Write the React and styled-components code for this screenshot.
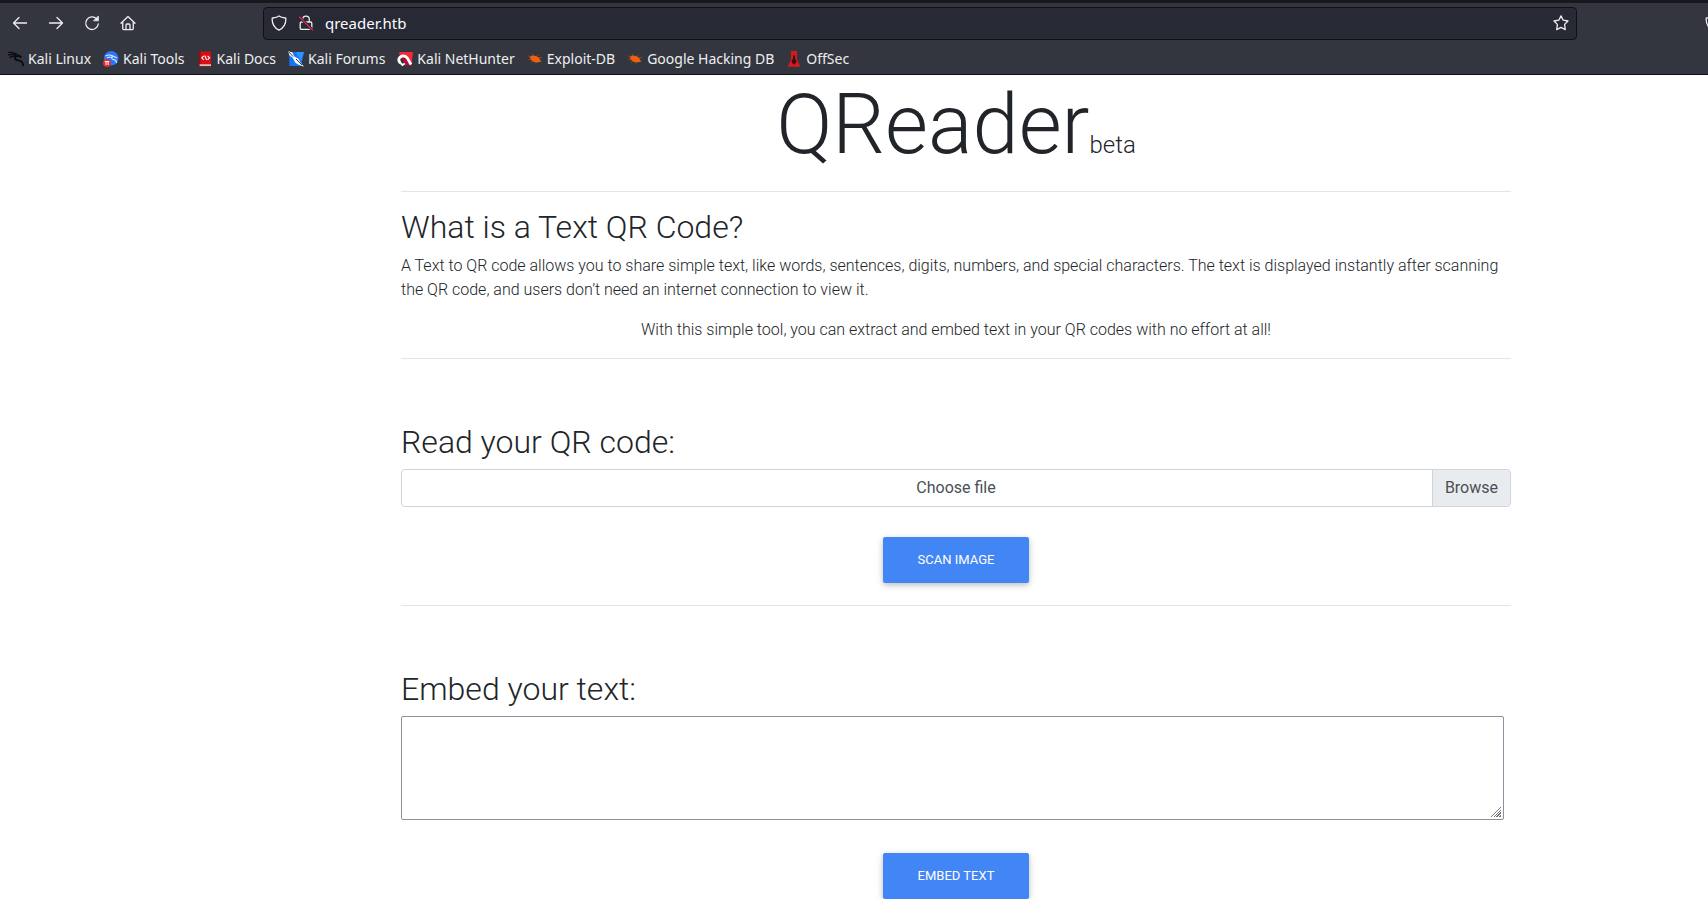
import React from "react";
import styled, { createGlobalStyle } from "styled-components";

const GlobalStyle = createGlobalStyle`
  *, *::before, *::after { box-sizing: border-box; }
  body {
    margin: 0;
    background: #fff;
    color: #212529;
    font: 300 16px/24px Roboto, "Open Sans", sans-serif;
  }
`;

const Page = styled.div`
  overflow-x: hidden;
`;

/* ---------- browser chrome ---------- */

const Chrome = styled.header`
  background: #33363e;
  border-top: 3px solid #17181d;
  border-bottom: 1px solid #0e0f12;
  color: #eeeef2;
  font: 400 14px/20px "Noto Sans", sans-serif;
`;

const Toolbar = styled.div`
  display: flex;
  align-items: center;
  height: 40px;
  padding-left: 2px;
`;

const ToolButton = styled.button`
  display: flex;
  align-items: center;
  justify-content: center;
  flex: none;
  width: 36px;
  height: 32px;
  padding: 0;
  border: 0;
  background: none;
  color: inherit;
`;

const AddressBar = styled.div`
  display: flex;
  flex: 1;
  align-items: center;
  gap: 11px;
  height: 33px;
  margin: 0 128px 0 117px;
  padding: 0 7px;
  background: #272935;
  border: 1px solid #101116;
  border-radius: 4px;
`;

const AddressInput = styled.input`
  flex: 1;
  min-width: 0;
  height: 24px;
  padding: 0;
  border: 0;
  outline: 0;
  background: none;
  color: #fbfbfe;
  font: inherit;
  font-size: 15px;
`;

const StarButton = styled(ToolButton)`
  width: 16px;
`;

const EdgeButton = styled(ToolButton)`
  width: 3px;
  justify-content: flex-start;
  overflow: hidden;
`;

const Bookmarks = styled.nav`
  display: flex;
  align-items: center;
  gap: 12px;
  height: 31px;
  padding-left: 8px;
`;

const Bookmark = styled.a`
  display: flex;
  align-items: center;
  gap: 4px;
  color: inherit;
  text-decoration: none;
  white-space: nowrap;
`;

const Icon = styled.svg.attrs({
  width: 16,
  height: 16,
  viewBox: "0 0 16 16",
  "aria-hidden": true,
})`
  flex: none;
  display: block;
  fill: none;
`;

const LineIcon = styled(Icon)`
  stroke: currentColor;
  stroke-width: 1.3;
  stroke-linecap: round;
  stroke-linejoin: round;
`;

const SHIELD = "M8 1 C6.5 2.2 3.6 2.8 1.7 3 C1.3 3.1 1.1 3.4 1.1 3.8 C1.1 8 2.3 12.5 8 15.2 C13.7 12.5 14.9 8 14.9 3.8 C14.9 3.4 14.7 3.1 14.3 3 C12.4 2.8 9.5 2.2 8 1 Z";

const DragonIcon = () => (
  <Icon>
    <path d="M0 1.5 C4 .8 7 2 9 3.5 L13 5.5 M0 4.2 C3 3 6 3.5 8 4.5 M1.5 7 C3.5 5 6 5 7.5 5.5" stroke="#090a0d" strokeWidth="1.2" />
    <path d="M13.5 6.2 C10 4.2 6.5 5 7 7.5 C7.5 10.2 12.3 8.6 14 11 C14.8 12.3 15 13.6 15.2 15" stroke="#090a0d" strokeWidth="1.8" />
  </Icon>
);

const ToolsIcon = () => (
  <Icon>
    <circle cx="8.2" cy="7.3" r="7.3" fill="#2777ff" />
    <path d="M2.5 5 C5 3.5 8 4 10 5 L14 7 M4 7 C6 5.5 8 6 9 6.5 M10.5 5.5 C7.5 6 8.5 8.5 11 8.8 C13 9 13.5 10.5 13.6 12" stroke="#dfeaff" strokeWidth="1.1" />
    <circle cx="4" cy="12" r="4" fill="#e62b34" />
    <path d="M1.8 10.5 H6.2 M3.1 10.5 V14 M5.1 10.5 V14" stroke="#fff" />
  </Icon>
);

const DocsIcon = () => (
  <Icon>
    <path d="M2 0.5 H14 V15.5 H2 Z" fill="#d90d15" />
    <path d="M2 0.5 H3.6 V15.5 H2 Z" fill="#a3080f" />
    <path d="M2.6 13.3 H14 V14.9 H2.6 Z" fill="#d9d2d2" />
    <path d="M6.8 4.8 L4.8 6.8 L6.8 8.8 M10.6 4.8 L12.6 6.8 L10.6 8.8 M7.7 4.6 L9.7 9" stroke="#fff" strokeWidth="1.1" />
  </Icon>
);

const ForumsIcon = () => (
  <Icon>
    <path d="M1 1 H16 L13 15 H1.5 Z" fill="#1675f5" />
    <path d="M8 1 H16 L13 10 Z" fill="#2f93ff" />
    <path d="M0 0 L4.5 1.5 L6 5.2 L10.5 7.8 L12.2 11 L16 15.8 L10 13.5 L7.3 11.7 L4.5 6.5 L1.5 4.5 Z" fill="#f6f7f9" />
    <path d="M.5 .5 L5 5.5 M8 8 L14 14" stroke="#242b3d" strokeWidth=".9" />
  </Icon>
);

const NetHunterIcon = () => (
  <Icon>
    <path d="M2 1 H16 L14.5 14.5 L8 12 L3 6 Z" fill="#f12a35" />
    <path d="M8 6 L15 15 L9 14 L5 9 Z" fill="#b50d38" />
    <path d="M3.2 12 C-.5 7.5 4.5 3.4 8.5 5.6 C11 7 11.5 9.5 14 13.5" stroke="#fff" strokeWidth="2.8" />
    <path d="M2.5 11 L5.5 14 L7.8 12.6" stroke="#fff" strokeWidth="1.8" />
    <path d="M4.8 10.6 C3.8 8.4 6 6.6 8 8.2" stroke="#22242b" strokeWidth="1" />
  </Icon>
);

const BugIcon = () => (
  <Icon>
    <path d="M2.8 6 C4.2 4 7 4 9.6 5.2 L12.4 7 L13 9 L14.6 10.4 L12.4 11 C9.5 12.2 5.8 11 4 8.8 Z" fill="#ec6110" />
    <path d="M3 6 L1 4.6 M4 8.3 L1.4 8.6 M6 10.2 L4.2 11.6 M9 11.2 L8.8 12.6 M9.8 5.4 L11.6 4 M12 7 L15 6.4 M6 4.5 L5.4 3.2" stroke="#a84c1c" strokeWidth=".8" />
  </Icon>
);

const OffSecIcon = () => (
  <Icon>
    <path d="M5 0 H11 V8.5 L14.5 15.8 H1.5 L5 8.5 Z" fill="#d71a20" />
    <path d="M7 4.5 H9 V8 L10.6 10 L9.6 12.5 H8.6 L8 14 L7.4 12.5 H6.4 L5.4 10 L7 8 Z" fill="#3a0a0d" />
  </Icon>
);

const BOOKMARKS = [
  ["Kali Linux", DragonIcon],
  ["Kali Tools", ToolsIcon],
  ["Kali Docs", DocsIcon],
  ["Kali Forums", ForumsIcon],
  ["Kali NetHunter", NetHunterIcon],
  ["Exploit-DB", BugIcon],
  ["Google Hacking DB", BugIcon],
  ["OffSec", OffSecIcon],
];

/* ---------- page content ---------- */

const Layout = styled.div`
  display: grid;
  grid-template-columns: 401fr minmax(0, 1110px) 197fr;
`;

const Main = styled.main`
  grid-column: 2;
`;

const Title = styled.h1`
  margin: 0;
  font-size: 83px;
  font-weight: 300;
  line-height: 100px;
  text-align: center;
`;

const Beta = styled.span`
  font-size: 24px;
  line-height: 24px;
`;

const Rule = styled.hr`
  height: 1px;
  margin: ${(p) => (p.$afterButton ? 22 : 16)}px 0 16px;
  border: 0;
  background: #e5e5e5;
`;

const Heading = styled.h2`
  margin: 0 0 8px;
  font-size: 32px;
  font-weight: 300;
  line-height: 38px;
`;

const Text = styled.p`
  margin: 0 0 16px;
  text-align: ${(p) => (p.$center ? "center" : "left")};
`;

const Form = styled.form`
  display: flex;
  flex-direction: column;
  padding-top: 48px;
`;

const FileField = styled.label`
  display: grid;
  grid-template-columns: 1fr auto;
  height: 38px;
  overflow: hidden;
  border: 1px solid #ced4da;
  border-radius: 4px;
  color: #495057;
  font-weight: 400;
  line-height: 36px;
`;

const FileInput = styled.input`
  position: absolute;
  width: 1px;
  height: 1px;
  opacity: 0;
`;

const FileName = styled.span`
  grid-area: 1 / 1 / 2 / 3;
  text-align: center;
`;

const Browse = styled.span`
  grid-area: 1 / 2;
  padding: 0 12px;
  background: #e9ecef;
  border-left: 1px solid #ced4da;
`;

const TextBox = styled.textarea`
  width: calc(100% - 7px);
  height: 104px;
  margin-bottom: 3px;
  padding: 2px;
  border: 1px solid #8f8f9d;
  border-radius: 2px;
  background: #fff;
  font: inherit;
  resize: both;

  &::-webkit-resizer {
    background:
      linear-gradient(135deg, #fff 50%, transparent 50%) 2px 2px / 11px 11px no-repeat,
      repeating-linear-gradient(135deg, #777 0 1px, #fff 1px 2px) 2px 2px / 11px 11px no-repeat;
  }
`;

const SubmitButton = styled.button`
  align-self: center;
  width: 146px;
  height: 46px;
  margin-top: 30px;
  padding: 0;
  border: 0;
  border-radius: 2px;
  background: #4285f4;
  box-shadow: 0 2px 5px rgba(0, 0, 0, 0.16), 0 2px 10px rgba(0, 0, 0, 0.12);
  color: #fff;
  font: 400 13px/20px Roboto, sans-serif;
  text-transform: uppercase;
`;

export default function App() {
  return (
    <Page>
      <GlobalStyle />
      <Chrome>
        <Toolbar>
          <ToolButton aria-label="Back">
            <LineIcon><path d="M14.5 8 H1.5 M7 2.5 L1.5 8 L7 13.5" /></LineIcon>
          </ToolButton>
          <ToolButton aria-label="Forward">
            <LineIcon><path d="M1.5 8 H14.5 M9 2.5 L14.5 8 L9 13.5" /></LineIcon>
          </ToolButton>
          <ToolButton aria-label="Reload">
            <LineIcon>
              <path d="M12.5 3.7 A6.3 6.3 0 1 0 14.3 9" />
              <path d="M14.4 1.3 V5.8 H9.9 Z" fill="currentColor" strokeWidth=".8" />
            </LineIcon>
          </ToolButton>
          <ToolButton aria-label="Home">
            <LineIcon><path d="M1 8.3 L8 1.5 L15 8.3 M2.7 7 V13.6 Q2.7 14.7 3.8 14.7 H12.2 Q13.3 14.7 13.3 13.6 V7 M6 14.5 V10 Q6 9 7 9 H9 Q10 9 10 10 V14.5" /></LineIcon>
          </ToolButton>
          <AddressBar>
            <LineIcon><path d={SHIELD} /></LineIcon>
            <LineIcon>
              <path d="M4.7 7 V4.5 A3.3 3.3 0 0 1 11.3 4.5 V7 M3.5 7 H12.5 Q13.8 7 13.8 8.3 V13 Q13.8 14.3 12.5 14.3 H3.5 Q2.2 14.3 2.2 13 V8.3 Q2.2 7 3.5 7 Z" />
              <path d="M1.5 2 L14.5 15" stroke="#272935" strokeWidth="3" />
              <path d="M1.5 2 L14.5 15" stroke="#e22850" />
            </LineIcon>
            <AddressInput aria-label="Address" defaultValue="qreader.htb" />
            <StarButton aria-label="Bookmark this page">
              <LineIcon><path d="M8 .9 L10.2 5.2 L15 6 L11.6 9.4 L12.3 14.6 L8 12.4 L3.7 14.6 L4.4 9.4 L1 6 L5.8 5.2 Z" /></LineIcon>
            </StarButton>
          </AddressBar>
          <EdgeButton aria-label="Protection">
            <LineIcon><path d={SHIELD} /></LineIcon>
          </EdgeButton>
        </Toolbar>
        <Bookmarks aria-label="Bookmarks">
          {BOOKMARKS.map(([name, Glyph]) => (
            <Bookmark href="#" key={name}>
              <Glyph />
              {name}
            </Bookmark>
          ))}
        </Bookmarks>
      </Chrome>

      <Layout>
        <Main>
          <Title>QReader<Beta>beta</Beta></Title>
          <Rule />
          <Heading>What is a Text QR Code?</Heading>
          <Text>
            A Text to QR code allows you to share simple text, like words, sentences, digits, numbers, and
            special characters. The text is displayed instantly after scanning the QR code, and users don’t
            need an internet connection to view it.
          </Text>
          <Text $center>
            With this simple tool, you can extract and embed text in your QR codes with no effort at all!
          </Text>
          <Rule />
          <Form>
            <Heading>Read your QR code:</Heading>
            <FileField>
              <FileInput type="file" accept="image/*" />
              <FileName>Choose file</FileName>
              <Browse>Browse</Browse>
            </FileField>
            <SubmitButton type="button">Scan image</SubmitButton>
          </Form>
          <Rule $afterButton />
          <Form>
            <Heading as="label" htmlFor="embed-text">Embed your text:</Heading>
            <TextBox id="embed-text" />
            <SubmitButton type="button">Embed text</SubmitButton>
          </Form>
        </Main>
      </Layout>
    </Page>
  );
}
